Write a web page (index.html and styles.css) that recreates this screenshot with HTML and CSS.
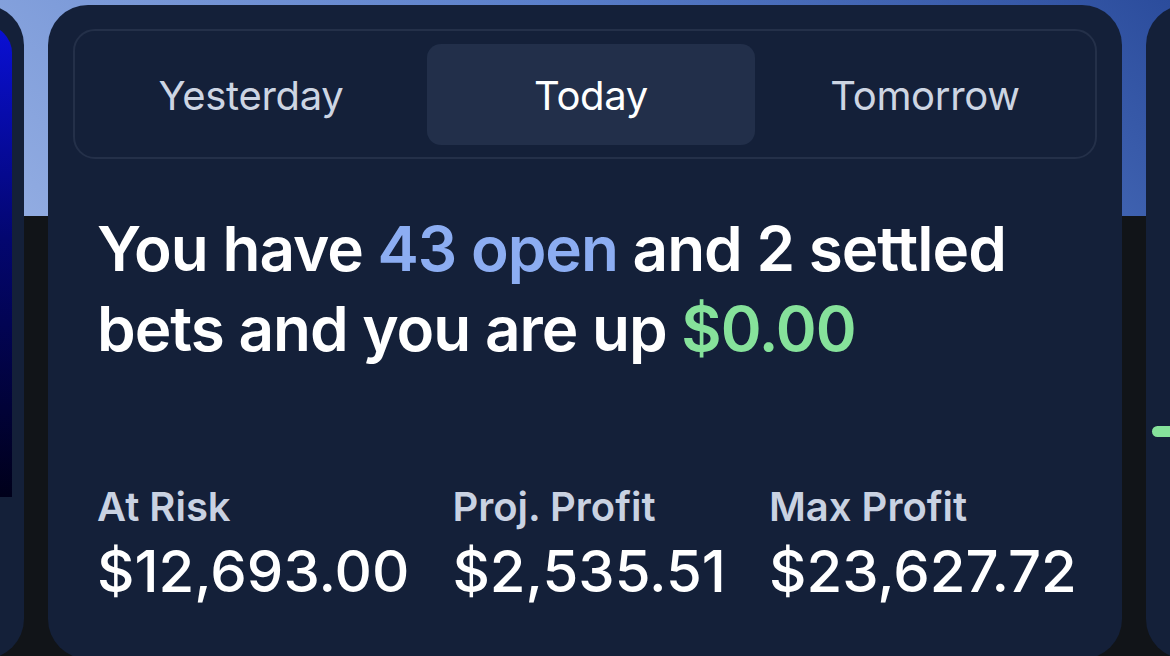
FILE: index.html
```html
<!DOCTYPE html>
<html lang="en">
<head>
<meta charset="utf-8">
<title>Bets summary</title>
<link rel="stylesheet" href="styles.css">
</head>
<body>
<div class="track">
  <div class="card card-side">
    <div class="side-panel"></div>
  </div>

  <div class="card card-main">
    <div class="tabs">
      <div class="tab">Yesterday</div>
      <div class="tab tab-active">Today</div>
      <div class="tab">Tomorrow</div>
    </div>

    <div class="content">
      <h1 class="headline">You have <span class="hl-blue">43 open</span> and 2 settled bets and you are up <span class="hl-green">$0.00</span></h1>

      <div class="stats">
        <div class="stat">
          <div class="stat-label">At Risk</div>
          <div class="stat-value">$12,693.00</div>
        </div>
        <div class="stat">
          <div class="stat-label">Proj. Profit</div>
          <div class="stat-value">$2,535.51</div>
        </div>
        <div class="stat">
          <div class="stat-label">Max Profit</div>
          <div class="stat-value">$23,627.72</div>
        </div>
      </div>
    </div>
  </div>

  <div class="card card-next">
    <div class="next-pill"></div>
  </div>
</div>
</body>
</html>
```

FILE: styles.css
```css
* { box-sizing: border-box; }

html, body {
  margin: 0;
  padding: 0;
}

body {
  width: 1170px;
  height: 656px;
  overflow: hidden;
  font-family: Inter, "Noto Sans", "Liberation Sans", sans-serif;
  background:
    linear-gradient(225deg, #2b4c9c 0%, #5a7fcb 45%, #93ade2 100%) top left / 100% 216px no-repeat,
    #111418;
}

.track {
  display: flex;
  gap: 24px;
  margin-left: -1050px;
  padding-top: 5px;
}

.card {
  flex: 0 0 1074px;
  min-width: 0;
  height: 654px;
  background: #142039;
  border-radius: 40px;
}

.card-side {
  padding: 20px 12px 0 0;
  display: flex;
  justify-content: flex-end;
}

.side-panel {
  width: 100%;
  height: 472px;
  border-radius: 28px 28px 0 0;
  background: linear-gradient(180deg, #0a10d6 0%, #030670 45%, #00001a 100%);
}

.card-main {
  padding: 24px 25px 0 25px;
}

.tabs {
  display: grid;
  grid-template-columns: 328px 328px 1fr;
  gap: 12px;
  padding: 13px 12px 12px 12px;
  border: 2px solid #243049;
  border-radius: 22px;
  height: 130px;
}

.tab {
  display: flex;
  align-items: center;
  justify-content: center;
  font-size: 40px;
  font-weight: 400;
  color: #cdd5e3;
  border-radius: 14px;
  letter-spacing: -0.3px;
  padding-top: 2px;
}

.tab-active {
  background: #222f4a;
  color: #ffffff;
}

.content {
  padding: 0 24px;
}

.headline {
  margin: 50px 0 0 0;
  font-size: 62px;
  line-height: 80px;
  font-weight: 600;
  color: #ffffff;
  letter-spacing: -1px;
  max-width: 940px;
}

.hl-blue { color: #8cadf2; }
.hl-green { color: #86e29b; }

.stats {
  display: flex;
  gap: 43px;
  margin-top: 114px;
}

.stat {
  flex: none;
}

.stat-label {
  font-size: 40px;
  line-height: 48px;
  font-weight: 600;
  color: #c9d2e2;
  letter-spacing: 0;
}

.stat-value {
  font-size: 58px;
  line-height: 72px;
  margin-top: 4px;
  font-weight: 500;
  color: #ffffff;
  letter-spacing: 0;
  white-space: nowrap;
}

.card-next {
  padding-top: 421px;
}

.next-pill {
  width: 40px;
  height: 11px;
  margin-left: 6px;
  border-radius: 6px;
  background: #86e29b;
}
```
